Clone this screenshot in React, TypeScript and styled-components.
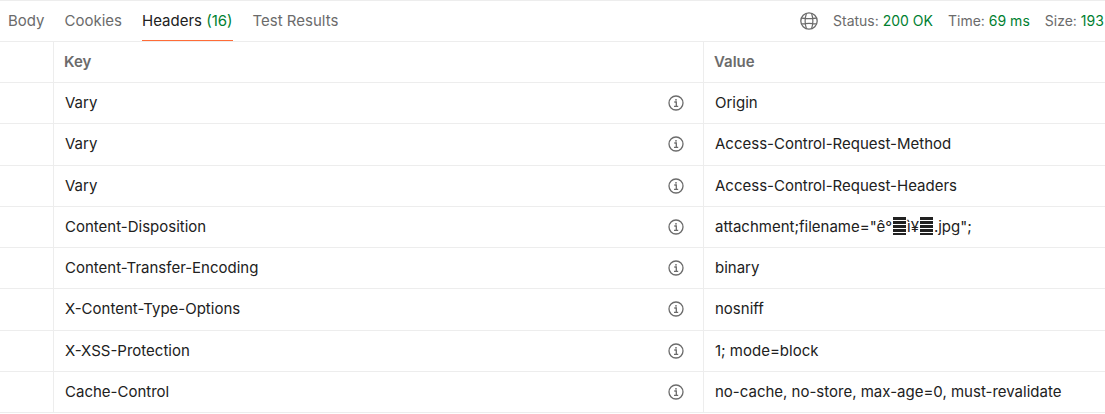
import React from "react";
import styled, { createGlobalStyle } from "styled-components";

const line = "#ededed";

const GlobalStyle = createGlobalStyle`
  * { box-sizing: border-box; }
  body {
    margin: 0;
    background: #fff;
    color: #212121;
    font-family: Inter, "Liberation Sans", sans-serif;
    font-size: 15px;
    line-height: 20px;
    overflow: hidden;
  }
`;

const Panel = styled.main`
  border-top: 1px solid ${line};
  overflow: hidden;
`;

const Toolbar = styled.header`
  display: flex;
  justify-content: space-between;
  height: 41px;
  border-bottom: 1px solid ${line};
  white-space: nowrap;
`;

const Tabs = styled.nav`
  display: flex;
  gap: 20px;
  padding-left: 8px;
`;

const Tab = styled.button<{ $active?: boolean }>`
  height: 40px;
  padding: 1px 0 0;
  border: 0;
  border-bottom: 1px solid ${(p) => (p.$active ? "#ff6c37" : "transparent")};
  background: none;
  color: ${(p) => (p.$active ? "#212121" : "#6b6b6b")};
  font: inherit;
  cursor: pointer;
`;

const Good = styled.span`
  color: #007f31;
`;

const Meta = styled.div`
  display: flex;
  align-items: center;
  gap: 15px;
  width: 305px;
  flex: none;
  color: #6b6b6b;
  font-size: 14px;
`;

const IconButton = styled.button`
  display: flex;
  padding: 0;
  border: 0;
  background: none;
  color: #6b6b6b;
  cursor: pointer;
`;

const Table = styled.table`
  width: 100%;
  table-layout: fixed;
  border-collapse: separate;
  border-spacing: 0;
`;

const SelectCol = styled.col`
  width: 54px;
`;

const KeyCol = styled.col`
  width: 650px;
`;

const Row = styled.tr`
  height: 41px;

  tbody &:nth-child(4n + 2) {
    height: 42px;
  }

  & > :last-child {
    border-right: 0;
  }
`;

const HeadCell = styled.th`
  padding: 0 10px;
  border-right: 1px solid ${line};
  border-bottom: 1px solid ${line};
  color: #6b6b6b;
  font-weight: 600;
  text-align: left;
`;

const Cell = styled.td`
  padding: 10px 19px 10px 11px;
  border-right: 1px solid ${line};
  border-bottom: 1px solid ${line};
  vertical-align: top;
  white-space: nowrap;
`;

const KeyContent = styled.div`
  display: flex;
  align-items: center;
  justify-content: space-between;
`;

const ControlGlyph = styled.span`
  display: inline-block;
  width: 13px;
  height: 18px;
  margin: -2px 1px 0;
  vertical-align: -3px;
  background: repeating-linear-gradient(#212121 0 3px, #fff 3px 4px);
`;

const GlobeIcon = () => (
  <svg width="18" height="18" viewBox="0 0 18 18" fill="none" stroke="currentColor" aria-hidden="true">
    <circle cx="9" cy="9" r="8.2" strokeWidth="1.3" />
    <path d="M6.5 1.2C4.8 6 4.8 12 6.5 16.8M11.5 1.2C13.2 6 13.2 12 11.5 16.8M1.6 6.2C6 6.8 12 6.8 16.4 6.2M1.6 11.8C6 11.2 12 11.2 16.4 11.8" strokeWidth="1.2" />
  </svg>
);

const InfoIcon = () => (
  <svg width="16" height="16" viewBox="0 0 16 16" fill="none" stroke="currentColor" aria-hidden="true">
    <circle cx="8" cy="8" r="7" strokeWidth="1.3" />
    <path d="M6.3 7H8.3V11.2M6 11.3H10.2" strokeWidth="1.3" />
    <circle cx="8" cy="4.8" r="0.9" fill="currentColor" stroke="none" />
  </svg>
);

const headers: { key: string; value: React.ReactNode }[] = [
  { key: "Vary", value: "Origin" },
  { key: "Vary", value: "Access-Control-Request-Method" },
  { key: "Vary", value: "Access-Control-Request-Headers" },
  {
    key: "Content-Disposition",
    value: (
      <>
        attachment;filename="ê°<ControlGlyph />ì¥<ControlGlyph />.jpg";
      </>
    ),
  },
  { key: "Content-Transfer-Encoding", value: "binary" },
  { key: "X-Content-Type-Options", value: "nosniff" },
  { key: "X-XSS-Protection", value: "1; mode=block" },
  { key: "Cache-Control", value: "no-cache, no-store, max-age=0, must-revalidate" },
];

export default function App() {
  return (
    <Panel>
      <GlobalStyle />
      <Toolbar>
        <Tabs aria-label="Response">
          <Tab>Body</Tab>
          <Tab>Cookies</Tab>
          <Tab $active aria-current="true">
            Headers <Good>(16)</Good>
          </Tab>
          <Tab>Test Results</Tab>
        </Tabs>
        <Meta>
          <IconButton aria-label="Network information">
            <GlobeIcon />
          </IconButton>
          <span>Status: <Good>200 OK</Good></span>
          <span>Time: <Good>69 ms</Good></span>
          <span>Size: <Good>193</Good></span>
        </Meta>
      </Toolbar>
      <Table>
        <colgroup>
          <SelectCol />
          <KeyCol />
          <col />
        </colgroup>
        <thead>
          <Row>
            <HeadCell />
            <HeadCell scope="col">Key</HeadCell>
            <HeadCell scope="col">Value</HeadCell>
          </Row>
        </thead>
        <tbody>
          {headers.map((h, i) => (
            <Row key={i}>
              <Cell />
              <Cell>
                <KeyContent>
                  {h.key}
                  <IconButton aria-label={`About ${h.key}`}>
                    <InfoIcon />
                  </IconButton>
                </KeyContent>
              </Cell>
              <Cell>{h.value}</Cell>
            </Row>
          ))}
        </tbody>
      </Table>
    </Panel>
  );
}
